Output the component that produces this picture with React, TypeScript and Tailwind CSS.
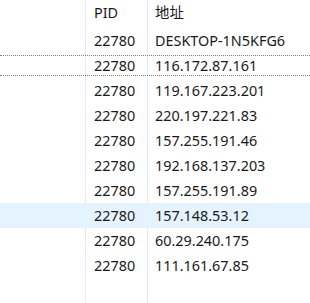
import React from 'react';

const rows = [
    { pid: '22780', addr: 'DESKTOP-1N5KFG6' },
    { pid: '22780', addr: '116.172.87.161', focused: true },
    { pid: '22780', addr: '119.167.223.201' },
    { pid: '22780', addr: '220.197.221.83' },
    { pid: '22780', addr: '157.255.191.46' },
    { pid: '22780', addr: '192.168.137.203' },
    { pid: '22780', addr: '157.255.191.89' },
    { pid: '22780', addr: '157.148.53.12', selected: true },
    { pid: '22780', addr: '60.29.240.175' },
    { pid: '22780', addr: '111.161.67.85' },
];

export default function App() {
    return (
        <div
            className="relative w-[310px] h-[303px] bg-white overflow-hidden text-[14.4px] text-[#1a1a1a]"
            style={{ fontFamily: '"Noto Sans", "Noto Sans CJK SC", sans-serif' }}
        >
            {/* column separators */}
            <div className="absolute top-0 bottom-0 left-[85px] w-px bg-[#e3eaf2]" />
            <div className="absolute top-0 bottom-0 left-[147px] w-px bg-[#e3eaf2]" />

            <div className="flex h-[28px] items-center pb-[3px]">
                <div className="w-[86px]" />
                <div className="w-[61px] pl-[8px]">PID</div>
                <div className="flex-1 pl-[8px]">地址</div>
            </div>

            {rows.map((r, i) => (
                <div
                    key={i}
                    className={`relative flex h-[25px] items-center ${r.selected ? 'bg-[#e5f3ff]' : ''}`}
                >
                    {r.focused && (
                        <div className="absolute left-0 right-0 top-[2px] bottom-[2px] border-y border-dotted border-[#808080]" />
                    )}
                    <div className="w-[86px]" />
                    <div className="w-[61px] pl-[8px]">{r.pid}</div>
                    <div className="flex-1 pl-[8px] whitespace-nowrap">{r.addr}</div>
                </div>
            ))}
        </div>
    );
}
